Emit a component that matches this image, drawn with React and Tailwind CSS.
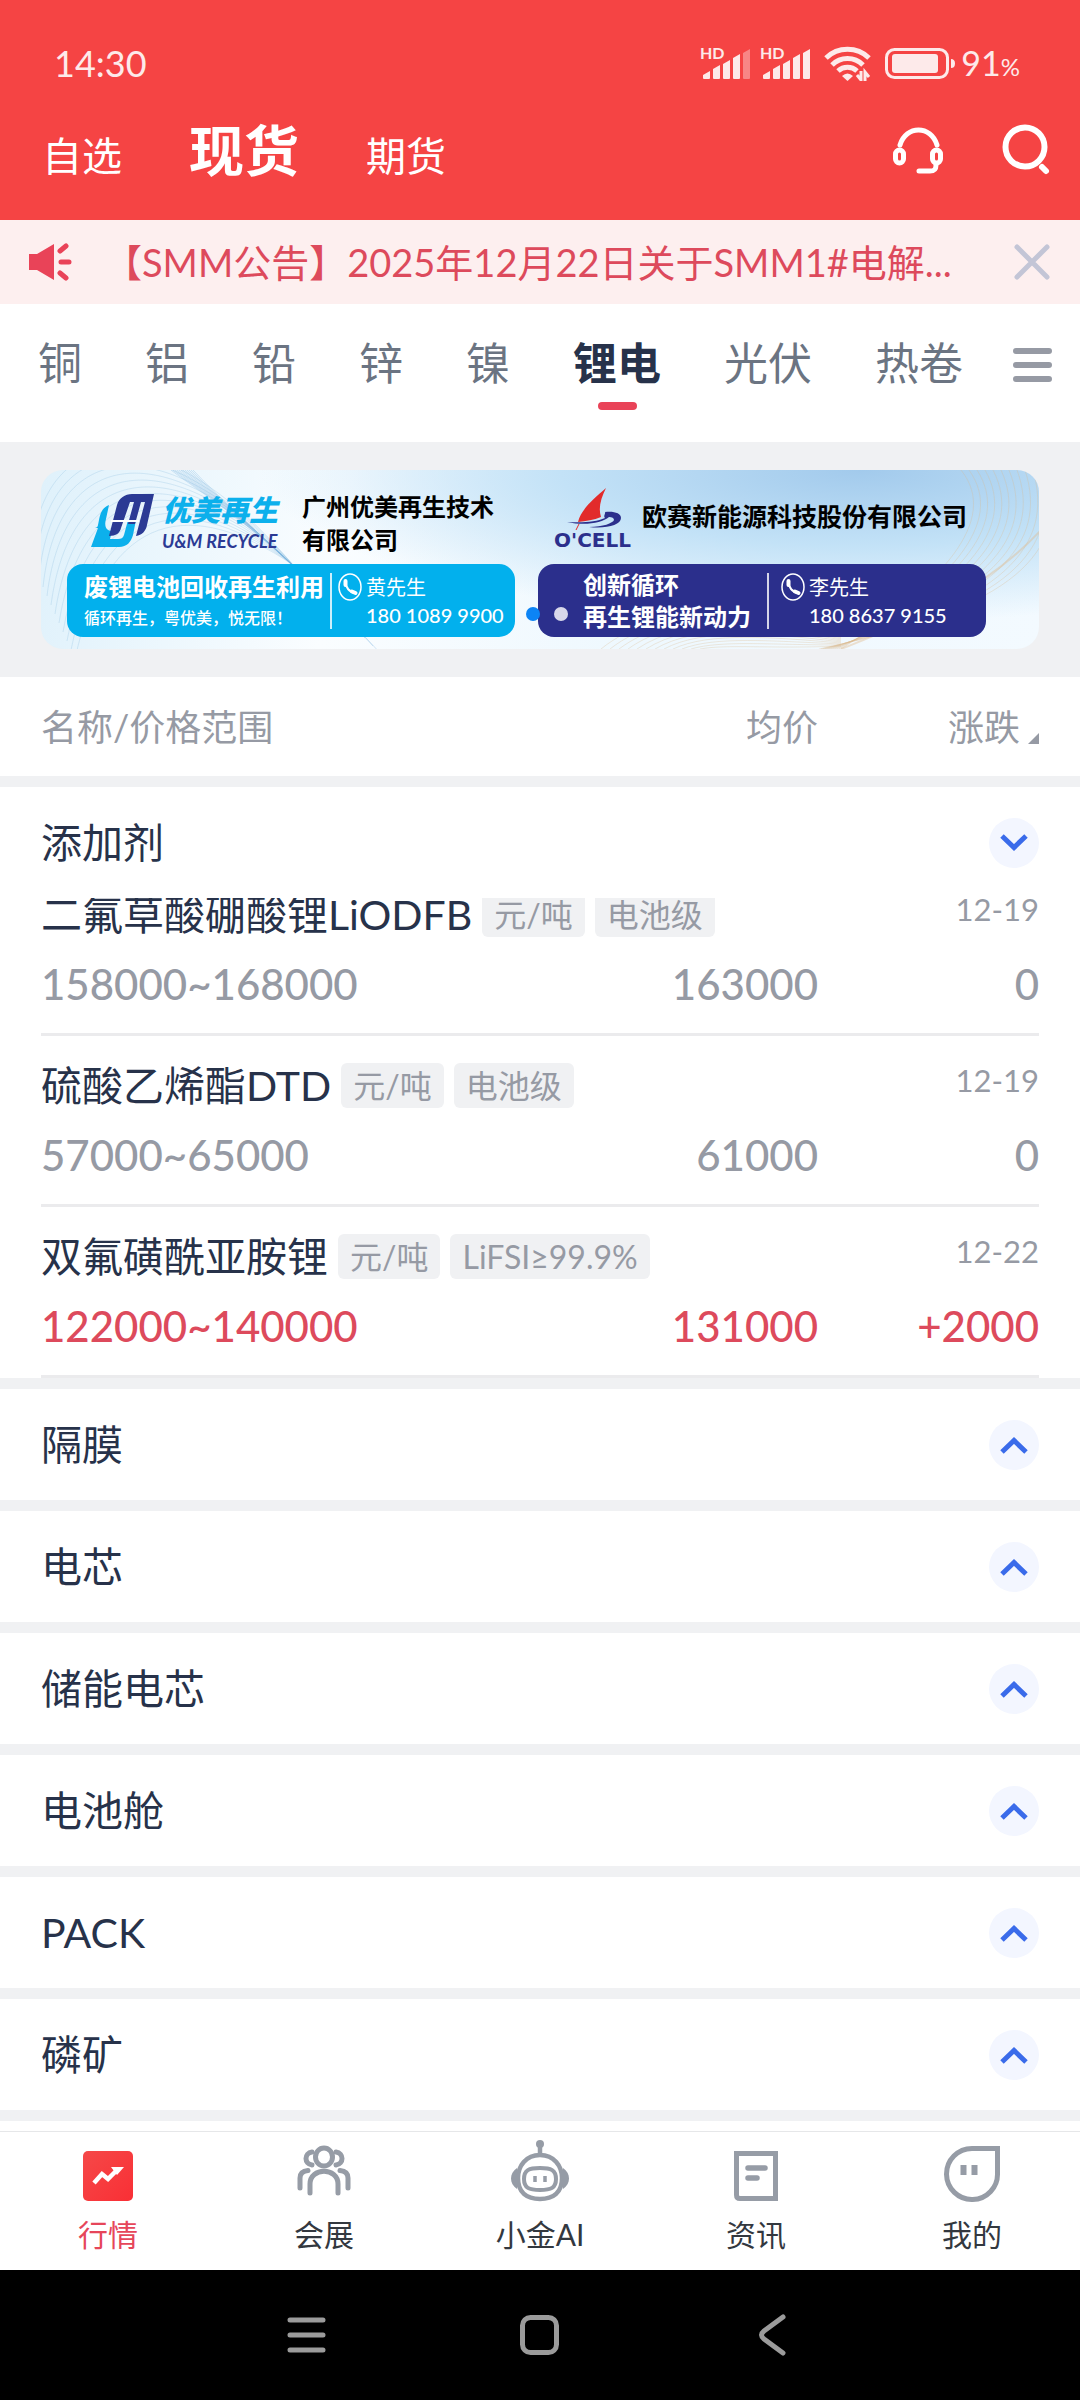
import { useState } from "react";

const metals = ["铜", "铝", "铅", "锌", "镍", "锂电", "光伏", "热卷"];

const groups = [
  {
    name: "添加剂",
    items: [
      { name: "二氟草酸硼酸锂LiODFB", tags: ["元/吨", "电池级"], date: "12-19", range: "158000~168000", avg: "163000", change: "0" },
      { name: "硫酸乙烯酯DTD", tags: ["元/吨", "电池级"], date: "12-19", range: "57000~65000", avg: "61000", change: "0" },
      { name: "双氟磺酰亚胺锂", tags: ["元/吨", "LiFSI≥99.9%"], date: "12-22", range: "122000~140000", avg: "131000", change: "+2000" },
    ],
  },
  { name: "隔膜", items: [] },
  { name: "电芯", items: [] },
  { name: "储能电芯", items: [] },
  { name: "电池舱", items: [] },
  { name: "PACK", items: [] },
  { name: "磷矿", items: [] },
];

function Signal({ weak }) {
  const bars = [8, 14, 19, 25, 30];
  return (
    <svg width="52" height="36" viewBox="0 0 52 36" fill="#fdeaea">
      <text x="0" y="14" fontSize="16" fontWeight="700">HD</text>
      {bars.map((h, i) => (
        <path
          key={h}
          d={`M${3 + i * 10} ${38 - h}l7-4v${h - 1}q0 1-1 1h-5q-1 0-1-1z`}
          opacity={weak && i === 4 ? 0.4 : 1}
        />
      ))}
    </svg>
  );
}

function StatusBar() {
  return (
    <div className="flex h-[92px] items-center justify-between pt-[34px] pl-[54px] pr-[60px] text-[36px] leading-[58px] text-[#fdeaea]">
      <span>14:30</span>
      <div className="flex items-center gap-3">
        <div className="flex gap-2">
          <Signal weak />
          <Signal />
        </div>
        <svg width="48" height="36" viewBox="0 0 48 36" fill="none" stroke="#fdeaea" strokeWidth="5">
          <path d="M2 13a31 31 0 0 1 43 0M8 20a22 22 0 0 1 31 0M14 26a14 14 0 0 1 19 0" />
          <path d="M18 31q5.500-5 11 0l-5.500 5z" fill="#fdeaea" stroke="none" />
          <path d="M33 30l4 5v-9M41 36v-9l4 5" strokeWidth="3" />
        </svg>
        <div className="flex items-center gap-1.5">
          <svg width="71" height="31" viewBox="0 0 71 31" fill="none">
            <rect x="2.500" y="1.500" width="61" height="28" rx="8" stroke="#fdeaea" strokeWidth="3" />
            <rect x="8" y="6" width="46" height="19" rx="3" fill="#fdeaea" />
            <path d="M67 11q4 0 4 4.500t-4 4.500z" fill="#fdeaea" />
          </svg>
          <span className="text-[34px]">
            91<span className="text-2xl">%</span>
          </span>
        </div>
      </div>
    </div>
  );
}

function Header() {
  return (
    <header className="bg-[#f54444] text-white">
      <StatusBar />
      <div className="flex h-32 items-start justify-between pl-[42px] pr-7">
        <nav className="flex items-baseline gap-[67px] pt-[18px] text-[40px] leading-[80px]">
          <a href="#watch">自选</a>
          <a href="#spot" className="text-[55px] font-bold">现货</a>
          <a href="#futures">期货</a>
        </nav>
        <div className="flex gap-[56px] pt-8">
          <button aria-label="客服">
            <svg width="52" height="52" viewBox="0 0 52 52" fill="none" stroke="white" strokeWidth="5" strokeLinecap="round">
              <path d="M8 21C14 1 39 1 45 21" />
              <rect x="3.500" y="26" width="8" height="13" rx="4" />
              <rect x="40.500" y="26" width="8" height="13" rx="4" />
              <path d="M44 41c0 5-2 6-6 6H27" />
            </svg>
          </button>
          <button aria-label="搜索">
            <svg width="52" height="52" viewBox="0 0 52 52" fill="none" stroke="white" strokeWidth="6" strokeLinecap="round">
              <circle cx="25" cy="23" r="19.500" />
              <path d="M42 43l4 4" />
            </svg>
          </button>
        </div>
      </div>
    </header>
  );
}

function Notice({ onClose }) {
  return (
    <div className="flex h-[84px] items-center bg-[#fdefef] pl-7 pr-[30px] text-[#dd4a5c]">
      <svg width="44" height="38" viewBox="0 0 44 38" fill="#e94358">
        <path d="M1 11h8L26 1v36L9 27H1z" />
        <path d="M32 8l6-5M33 19h8M32 30l6 5" stroke="#e94358" strokeWidth="5" strokeLinecap="round" />
      </svg>
      <p className="ml-8 flex-1 truncate text-[38px] leading-[56px]">
        【SMM公告】2025年12月22日关于SMM1#电解...
      </p>
      <button aria-label="关闭" onClick={onClose}>
        <svg width="36" height="36" viewBox="0 0 36 36" stroke="#c3c5d6" strokeWidth="5" strokeLinecap="round">
          <path d="M3 3l30 30M33 3L3 33" />
        </svg>
      </button>
    </div>
  );
}

function MetalTabs({ active, onSelect }) {
  return (
    <div className="flex h-[138px] items-start justify-between bg-white pl-[38px] pr-7 pt-[29px]">
      <div className="flex gap-[63px] text-[44px] leading-[60px] text-[#6b7482]">
        {metals.map((m) => (
          <button
            key={m}
            onClick={() => onSelect(m)}
            className={m === active ? "flex flex-col items-center font-bold text-[#27324a]" : "flex flex-col items-center"}
          >
            {m}
            {m === active && <span className="mt-[9px] h-2 w-[39px] rounded-full bg-[#e94358]" />}
          </button>
        ))}
      </div>
      <button aria-label="全部品种" className="pt-[15px]">
        <svg width="39" height="34" viewBox="0 0 39 34" stroke="#969aa4" strokeWidth="6" strokeLinecap="round">
          <path d="M3 3h33M3 17h33M3 31h33" />
        </svg>
      </button>
    </div>
  );
}

function PhoneIcon() {
  return (
    <svg width="24" height="28" viewBox="0 0 24 28" fill="none" stroke="white">
      <ellipse cx="12" cy="14" rx="11" ry="13" strokeWidth="1.500" />
      <path d="M7.500 8.500c0 6 4 11 9.500 11" strokeWidth="2" />
      <path d="M7.500 8v4M14 18.500l3.500 1.500" strokeWidth="4" strokeLinecap="round" />
    </svg>
  );
}

function Contact({ name, phone }) {
  return (
    <div className="flex items-start">
      <PhoneIcon />
      <div className="ml-1 whitespace-nowrap text-xl leading-7">
        <p>{name}</p>
        <p className="font-medium">{phone}</p>
      </div>
    </div>
  );
}

function BannerWaves() {
  const lines = Array.from({ length: 12 }, (_, i) => i);
  return (
    <svg className="absolute inset-0 h-full w-full" viewBox="0 0 998 179" preserveAspectRatio="none" fill="none">
      {lines.map((i) => (
        <path key={i} d={`M${-10 + i * 4} ${90 + i * 9}C${i * 6} ${-60 + i * 9} ${130 + i * 2} ${-50 + i * 7} 252 95`} stroke="#9fc9e6" strokeOpacity="0.35" />
      ))}
      {lines.map((i) => (
        <path key={i} d={`M${152 - i * 2} 0C${180 - i} 30 ${215 + i} 60 ${252 + i * 8} ${96 + i * 8}`} stroke="#7cb4dd" strokeOpacity="0.3" />
      ))}
      {lines.map((i) => (
        <path key={i} d={`M${920 + i * 8} 0C${960 + i * 6} ${50 + i * 3} ${900 + i * 7} ${115 + i * 2} ${800 - i * 2} 179`} stroke="#d9b98f" strokeOpacity="0.3" />
      ))}
      {lines.map((i) => (
        <path key={i} d={`M${560 + i * 9} 179C${620 + i * 6} ${130 + i * 4} 730 ${135 + i * 4} 800 ${165 + i}`} stroke="#d9b98f" strokeOpacity="0.3" />
      ))}
      <path d="M800 179C860 155 940 125 1000 60" stroke="#e2b98a" strokeWidth="2" strokeOpacity="0.4" />
    </svg>
  );
}

function Banner() {
  return (
    <div className="bg-[#f0f1f3] px-[41px] pt-7 pb-7">
      <a
        href="#ad"
        className="relative block h-[179px] overflow-hidden rounded-[22px] bg-[radial-gradient(ellipse_60%_85%_at_82%_0%,#a2caec,#c3e2f7_50%,transparent),linear-gradient(100deg,#dff1fb,#fafdff_30%,#eef8fe_60%,#f3faff)] text-white"
      >
        <BannerWaves />
        <div className="relative flex gap-[23px] pl-[26px] pr-[53px]">
          <div className="min-w-0 flex-1">
            <div className="flex h-[94px] items-start pl-6 pt-5">
              <svg className="mt-1" width="65" height="54" viewBox="0 0 65 54">
                <path d="M18 11C9 15 9 22 7 31c0 2-2 3-3 3h3L0 53h28c8 0 12-5 14-12l3-15h-8l-4 15c-1 3-3 4-6 4h-8l2-8c-6 0-8-5-6-12z" fill="#0cb0ec" />
                <path d="M18 42l8-31C28 4 34 0 41 0h22l-7 31c-1 6-5 10-11 11l9-34h-4l-6 22h-7l6-22h-4l-9 26c-1 5-5 8-12 8z" fill="#2b3a94" />
                <path d="M20 27h28" stroke="white" strokeWidth="2" />
              </svg>
              <div className="ml-1.5 w-[124px] whitespace-nowrap">
                <p className="text-[29px] font-black italic leading-10 text-[#0cb0ec]">优美再生</p>
                <p className="text-lg font-bold italic leading-[22px] text-[#2b3a94]">U&amp;M RECYCLE</p>
              </div>
              <p className="ml-4 whitespace-nowrap text-2xl font-bold leading-[33px] text-black">
                广州优美再生技术
                <br />
                有限公司
              </p>
            </div>
            <div className="flex h-[73px] items-center rounded-2xl bg-[#02b0ed] pl-[17px]">
              <div className="whitespace-nowrap">
                <p className="text-2xl font-bold leading-[34px]">废锂电池回收再生利用</p>
                <p className="text-base font-medium leading-7">循环再生，粤优美，悦无限！</p>
              </div>
              <div className="ml-1.5 mr-1.5 h-14 w-0.5 bg-white/80" />
              <Contact name="黄先生" phone="180 1089 9900" />
            </div>
          </div>
          <div className="min-w-0 flex-1">
            <div className="flex h-[94px] items-start pl-4 pt-4">
              <div className="w-[84px]">
                <svg width="84" height="44" viewBox="0 0 84 44">
                  <path d="M52 2C38 14 27 24 24 36c8-1 16-2 23-5-3-9 0-19 5-29z" fill="#e22b2b" />
                  <path d="M13 36c16 1 29 0 38-4-2-2 1-5 0-6 9-1 16 1 16 6 0 7-15 11-32 9 14 0 24-4 25-7 0-2-2-3-5-3-7 6-24 9-42 5z" fill="#2b2f8c" />
                  <path d="M25 38l-3 6" stroke="#e22b2b" />
                </svg>
                <p className="font-['DejaVu_Sans',sans-serif] text-xl font-bold leading-5 text-[#2b2f8c]">O'CELL</p>
              </div>
              <p className="ml-1 mt-3 whitespace-nowrap text-[25px] font-bold leading-9 text-black">欧赛新能源科技股份有限公司</p>
            </div>
            <div className="flex h-[73px] items-center rounded-2xl bg-[#2b2f8c] pl-[45px]">
              <p className="whitespace-nowrap text-2xl font-bold leading-8">
                创新循环
                <br />
                再生锂能新动力
              </p>
              <div className="ml-4 mr-3 h-14 w-0.5 bg-white/80" />
              <Contact name="李先生" phone="180 8637 9155" />
            </div>
          </div>
        </div>
        {/* carousel dots */}
        <div className="absolute bottom-7 left-1/2 flex -translate-x-1/2 gap-[14px] pl-[14px]">
          <span className="size-[14px] rounded-full bg-[#0c84f5]" />
          <span className="size-[14px] rounded-full bg-[#d8d8ea]" />
        </div>
      </a>
    </div>
  );
}

function ColumnTitles() {
  return (
    <div className="flex h-[99px] items-center bg-white px-[41px] text-4xl text-[#969aa4]">
      <span className="flex-1">名称/价格范围</span>
      <span>均价</span>
      <button className="flex w-[221px] items-center justify-end gap-2">
        涨跌
        <svg className="mt-6" width="11" height="11" viewBox="0 0 11 11" fill="#969aa4">
          <path d="M11 0v11H0z" />
        </svg>
      </button>
    </div>
  );
}

function PriceRows({ item }) {
  const color = item.change.startsWith("+") ? "text-[#dd4a5c]" : "text-[#969aa4]";
  return (
    <tbody>
      <tr>
        <td colSpan={2} className="p-0 pt-[27px]">
          <div className="flex h-[45px] items-center gap-2.5">
            <span className="text-[41px] text-[#27324a]">{item.name}</span>
            {item.tags.map((tag) => (
              <span key={tag} className="rounded-md bg-[#f0f1f3] px-3 text-[32px] leading-[45px] text-[#969aa4]">{tag}</span>
            ))}
          </div>
        </td>
        <td className="p-0 pt-[22px] text-right align-top text-[31px] leading-[45px] text-[#969aa4]">{item.date}</td>
      </tr>
      <tr className={`border-b-3 border-[#ebebed] text-[42px] font-medium leading-[56px] ${color}`}>
        <td className="p-0 pt-[19px] pb-[21px]">{item.range}</td>
        <td className="p-0 pt-[19px] pb-[21px] text-right">{item.avg}</td>
        <td className="w-[221px] p-0 pt-[19px] pb-[21px] text-right">{item.change}</td>
      </tr>
    </tbody>
  );
}

function Group({ group, open, onToggle }) {
  return (
    <section className="border-t-11 border-[#f0f1f3] bg-white">
      <button
        onClick={onToggle}
        aria-expanded={open}
        className="flex h-[111px] w-full items-center justify-between px-[41px] text-[41px] text-[#27324a]"
      >
        {group.name}
        <span className="flex size-[50px] items-center justify-center rounded-full bg-[#f3f6ff]">
          <svg width="30" height="20" viewBox="0 0 30 20" fill="none" stroke="#3a6bea" strokeWidth="5">
            <path d={open ? "M3 3l12 11.500L27 3" : "M3 17L15 5.500 27 17"} />
          </svg>
        </span>
      </button>
      {open && (
        <div className="overflow-hidden px-[41px]">
          <table className="-mt-[33px] w-full border-collapse">
            {group.items.map((item) => (
              <PriceRows key={item.name} item={item} />
            ))}
          </table>
        </div>
      )}
    </section>
  );
}

function BottomNav() {
  const items = [
    {
      label: "行情",
      icon: (
        <>
          <defs>
            <linearGradient id="hq" x1="0" y1="0" x2="1" y2="1">
              <stop stopColor="#f54848" />
              <stop offset="1" stopColor="#f92f35" />
            </linearGradient>
          </defs>
          <rect x="6" y="11" width="50" height="50" rx="5" fill="url(#hq)" />
          <path d="M17 43l8-9 6 5 10-10" stroke="white" strokeWidth="4.500" />
          <path d="M34 27h13l-7 8z" fill="white" />
        </>
      ),
    },
    {
      label: "会展",
      icon: (
        <g stroke="#969ca6" strokeWidth="5" strokeLinecap="round">
          <ellipse cx="31" cy="17" rx="8.500" ry="9" />
          <path d="M17 53V44c0-17 28-17 28 0v9M19 12c-8 1-8 12 0 13M43 12c8 1 8 12 0 13M7 48V38c0-5 3-7 8-7.500M55 48V38c0-5-3-7-8-7.500" />
        </g>
      ),
    },
    {
      label: "小金AI",
      icon: (
        <g stroke="#969ca6" strokeWidth="4.500">
          <path d="M31 3v12" />
          <circle cx="31" cy="4" r="4" fill="#969ca6" stroke="none" />
          <path d="M31 15c14 0 22 11 22 23 0 15-9 21-22 21S9 53 9 38c0-12 8-23 22-23z" />
          <path d="M8 28c-8 5-8 16 0 21zM54 28c8 5 8 16 0 21z" fill="#969ca6" stroke="none" />
          <path d="M31 28c11 0 16 2 16 11s-5 11-16 11-16-2-16-11 5-11 16-11z" strokeWidth="4" />
          <path d="M26 36v6M36 36v6" strokeWidth="3.500" />
        </g>
      ),
    },
    {
      label: "资讯",
      icon: (
        <g stroke="#969ca6" strokeWidth="5">
          <path d="M12 13.500h38.500v45H15q-3.500 0-3.500-3.500V13.500z" />
          <path d="M23 28h17M23 38h9" strokeLinecap="round" strokeWidth="5.500" />
        </g>
      ),
    },
    {
      label: "我的",
      icon: (
        <g stroke="#969ca6" strokeWidth="5">
          <path d="M31 8.500h25.500V33A25.500 25.500 0 1 1 31 8.500z" />
          <path d="M22.500 25v10M33.500 25v10" strokeWidth="6" />
        </g>
      ),
    },
  ];
  return (
    <nav className="flex border-t border-[#e6e7e9] bg-white pt-2 pb-4">
      {items.map((item, i) => (
        <a
          key={item.label}
          href={`#tab${i}`}
          className={`flex flex-1 flex-col items-center text-3xl leading-10 ${i === 0 ? "text-[#e6465a]" : "text-[#33383f]"}`}
        >
          <svg width="62" height="62" viewBox="0 0 62 62" fill="none" className="mb-3">
            {item.icon}
          </svg>
          {item.label}
        </a>
      ))}
    </nav>
  );
}

function SystemBar() {
  return (
    <div className="flex h-[130px] items-center justify-center gap-[193px] bg-black">
      <button aria-label="最近任务">
        <svg width="40" height="42" viewBox="0 0 40 42" stroke="#9b9b9b" strokeWidth="5" strokeLinecap="round">
          <path d="M3 6h33M3 21h33M3 36h33" />
        </svg>
      </button>
      <button aria-label="主页">
        <svg width="40" height="42" viewBox="0 0 40 42" fill="none" stroke="#9b9b9b" strokeWidth="5">
          <rect x="2.500" y="3.500" width="34" height="35" rx="8" />
        </svg>
      </button>
      <button aria-label="返回">
        <svg width="40" height="42" viewBox="0 0 40 42" fill="none" stroke="#9b9b9b" strokeWidth="5" strokeLinecap="round">
          <path d="M30 3L11 17q-5 4 0 8l19 14" />
        </svg>
      </button>
    </div>
  );
}

export default function App() {
  const [metal, setMetal] = useState("锂电");
  const [openGroup, setOpenGroup] = useState("添加剂");
  const [showNotice, setShowNotice] = useState(true);

  return (
    <div className="flex min-h-screen flex-col bg-white font-['Lato','Noto_Sans_CJK_SC',sans-serif]">
      <Header />
      {showNotice && <Notice onClose={() => setShowNotice(false)} />}
      <MetalTabs active={metal} onSelect={setMetal} />
      <Banner />
      <ColumnTitles />
      <main className="flex-1">
        {groups.map((g) => (
          <Group
            key={g.name}
            group={g}
            open={openGroup === g.name}
            onToggle={() => setOpenGroup(openGroup === g.name ? "" : g.name)}
          />
        ))}
        <div className="border-t-11 border-[#f0f1f3]" />
      </main>
      <footer>
        <BottomNav />
        <SystemBar />
      </footer>
    </div>
  );
}
